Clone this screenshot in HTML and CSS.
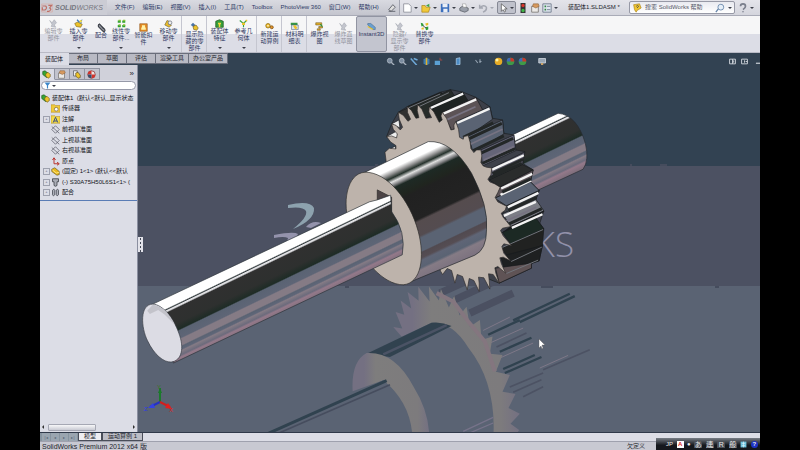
FILE: index.html
```
<!DOCTYPE html>
<html lang="zh-CN">
  <head>
    <meta charset="UTF-8" />
    <meta name="viewport" content="width=device-width, initial-scale=1.0" />
    <title>装配体1.SLDASM - SolidWorks</title>
    <link rel="stylesheet" href="styles.css" />
  </head>
  <body>
    <!-- Shared icons -->
    <svg class="defs" width="0" height="0">
      <symbol id="i-part" viewBox="0 0 12 12">
        <path d="M1 3l4-2 6 5v4l-3 1-7-5z" fill="#e9b91f" stroke="#5a4a12" stroke-width=".8" />
        <path d="M2 4l5 4 4-1" fill="none" stroke="#fff3a0" />
      </symbol>
      <symbol id="i-asm" viewBox="0 0 12 12">
        <path d="M1 2l3-1 5 4v4l-3 1-5-4z" fill="#35a535" stroke="#155015" stroke-width=".8" />
        <path d="M5 5l3-2 3 3v3L8 11 5 8z" fill="#edc32b" stroke="#6b5514" stroke-width=".8" />
      </symbol>
      <symbol id="i-insert" viewBox="0 0 12 12">
        <path d="M1 6l4-2 6 3-2 4-6-1z" fill="#ecc22b" stroke="#77601a" stroke-width=".8" />
        <path d="M4 1l3 3 3-2-1 4" fill="none" stroke="#3b76b8" stroke-width="1.5" />
        <circle cx="9" cy="3" r="1.6" fill="#f5dc4a" />
      </symbol>
      <symbol id="i-clip" viewBox="0 0 12 12">
        <path d="M3 1l7 7q2 4-2 3L2 5q-1-4 2-3l5 6" fill="#8d9099" stroke="#33373f" stroke-width="1.4" />
      </symbol>
      <symbol id="i-pattern" viewBox="0 0 12 12">
        <path d="M1 2h4v3H1zM7 2h4v3H7zM1 8h4v3H1zM7 8h4v3H7z" fill="#2e9f33" />
        <path d="M2 1h3v2H2zM8 1h3v2H8zM2 7h3v2H2zM8 7h3v2H8z" fill="#8bc43b" />
      </symbol>
      <symbol id="i-smart" viewBox="0 0 12 12">
        <path d="M1 1h10v10H1z" fill="#e78f25" stroke="#8d541b" stroke-width=".8" />
        <path d="M4 3h4v3h1v3H3V6h1z" fill="#fff2a8" />
      </symbol>
      <symbol id="i-move" viewBox="0 0 12 12">
        <path d="M1 8l3-6 3 1-1 4 4 1-3 3z" fill="#e9bc2a" stroke="#594e30" stroke-width=".7" />
        <circle cx="8" cy="5" r="2.5" fill="#eee" stroke="#6f7583" />
      </symbol>
      <symbol id="i-show" viewBox="0 0 12 12">
        <path d="M1 4l3-3 3 3-2 3z" fill="#4a74a6" />
        <path d="M4 6l4-2 3 4-2 3-4-1z" fill="#edc32b" stroke="#66531e" stroke-width=".8" />
      </symbol>
      <symbol id="i-feature" viewBox="0 0 12 12">
        <path d="M1 3l5-2 5 2v8H1z" fill="#359f3b" stroke="#275b20" />
        <path d="M4 5h4v2H7v4H5V7H4z" fill="#f2d43e" />
      </symbol>
      <symbol id="i-ref" viewBox="0 0 12 12">
        <path d="M1 2l5 4 4-4M6 6v5" fill="none" stroke="#38a13e" stroke-width="1.5" />
        <path d="M4 5h4v3H4zM9 1h2v2H9z" fill="#edc52a" />
      </symbol>
      <symbol id="i-motion" viewBox="0 0 12 12">
        <circle cx="4" cy="5" r="3" fill="#f0bb2b" stroke="#8b6b13" />
        <circle cx="9" cy="7" r="2" fill="#e5952a" stroke="#7a4e13" />
        <circle cx="4" cy="5" r="1" fill="#fff" />
      </symbol>
      <symbol id="i-bom" viewBox="0 0 12 12">
        <path d="M1 1h9v3H1z" fill="#349745" />
        <path d="M2 4h9v6H2z" fill="#dbe4ee" stroke="#4a5d7b" stroke-width=".7" />
        <path d="M4 5l3-1 3 4-3 2z" fill="#ecc32d" />
      </symbol>
      <symbol id="i-explode" viewBox="0 0 12 12">
        <path d="M1 1h8v3H1zM5 6h5v2H5zM3 9h4v2H3z" fill="#e6b32b" stroke="#654d1d" stroke-width=".7" />
        <path d="M7 3l3 3" stroke="#2f9538" stroke-width="1.5" />
      </symbol>
      <symbol id="i-gray" viewBox="0 0 12 12">
        <path d="M1 2l3 3 3-4 3 4-3 3 2 3-6-1 1-3z" fill="#c3c5cd" stroke="#a5a8b1" stroke-width=".8" />
      </symbol>
      <symbol id="i-instant" viewBox="0 0 12 12">
        <path d="M1 2h4l6 5v3H8L1 4z" fill="#6a9fcf" stroke="#3f658e" stroke-width=".7" />
        <path d="M1 6l7 4" stroke="#e9c32e" stroke-width="1.5" />
      </symbol>
      <symbol id="i-replace" viewBox="0 0 12 12">
        <path d="M1 1l3 1 1 3-3 1zM7 7l4-1v4l-3 1z" fill="#2e9b39" />
        <path d="M7 2l4-1v3L8 5zM2 8l3-1v3H2z" fill="#e8bf2b" />
        <path d="M4 5l4 3" stroke="#2d2d2d" />
      </symbol>
      <symbol id="i-plane" viewBox="0 0 12 12">
        <path d="M6 1l5 5-5 5-5-5zM1 2l10 9" fill="none" stroke="#4d515d" stroke-width=".9" />
      </symbol>
      <symbol id="i-lens" viewBox="0 0 12 12">
        <circle cx="5" cy="5" r="3.2" fill="#7d8da0" stroke="#b8c1cc" />
        <path d="M7 7l4 4" stroke="#a9b2be" stroke-width="1.6" />
      </symbol>
      <symbol id="i-ball" viewBox="0 0 12 12">
        <circle cx="6" cy="6" r="5" fill="#3f9a48" />
        <path d="M6 6L1 6a5 5 0 0 1 5-5z" fill="#4067b8" />
        <path d="M6 6V1a5 5 0 0 1 5 5z" fill="#c8352d" />
      </symbol>
      <symbol id="i-look" viewBox="0 0 12 12">
        <circle cx="6" cy="6" r="5" fill="#e8e4e4" stroke="#8a3030" />
        <path d="M6 6V1a5 5 0 0 0-5 5zM6 6h5a5 5 0 0 1-5 5z" fill="#d2332c" />
        <path d="M6 6H1a5 5 0 0 0 5 5z" fill="#38506f" />
      </symbol>
      <symbol id="i-hand" viewBox="0 0 12 12">
        <path d="M2 4h8v7H2z" fill="#eceae7" stroke="#7a7672" />
        <path d="M4 1h6l1 3-4 2-4-2z" fill="#d79a5f" stroke="#7d552e" stroke-width=".6" />
      </symbol>
      <symbol id="i-mate" viewBox="0 0 12 12">
        <path d="M2 3q2-3 3 0v6q-2 3-3 0zM7 3q2-3 3 0v6q-2 3-3 0z" fill="#aeb1ba" stroke="#3d414b" />
      </symbol>
      <symbol id="i-bolt" viewBox="0 0 12 12">
        <path d="M2 1h8v4H8v5l-2 1-2-1V5H2z" fill="#a9acb5" stroke="#33363e" />
      </symbol>
      <symbol id="i-tree" viewBox="0 0 12 12">
        <path d="M2 1h5v7H2z" fill="#eee" stroke="#5d5f68" />
        <path d="M5 4l3-1 3 4v3L8 11 5 8z" fill="#edc32b" stroke="#4f4320" stroke-width=".8" />
      </symbol>
    </svg>

    <div class="app">
      <header class="titlebar">
        <div class="brand">
          <svg viewBox="0 0 18 18" class="brand-mark">
            <path d="M1 3h16v12H1z" fill="none" stroke="#d9a9a4" />
            <path d="M2 6h5q3 3-1 6H2V8M11 5h5l-3 4q4 2-1 5H9" fill="none" stroke="#bf6f66" stroke-width="1.8" />
          </svg>
          <b>SOLID</b><span>WORKS</span>
        </div>
        <nav class="menu">
          <a href="#">文件(F)</a>
          <a href="#">编辑(E)</a>
          <a href="#">视图(V)</a>
          <a href="#">插入(I)</a>
          <a href="#">工具(T)</a>
          <a href="#">Toolbox</a>
          <a href="#">PhotoView 360</a>
          <a href="#">窗口(W)</a>
          <a href="#">帮助(H)</a>
          <button aria-label="固定"><svg viewBox="0 0 12 12"><path d="M2 8l5-6 3 3-5 5zM2 10h8" fill="#ddd" stroke="#555963" /></svg></button>
        </nav>
        <div class="quick">
          <button class="drop" aria-label="新建"><svg viewBox="0 0 12 12"><path d="M2 1h6l3 3v7H2z" fill="#fff" stroke="#8a8d98" /></svg></button>
          <button class="drop" aria-label="打开"><svg viewBox="0 0 12 12"><path d="M1 3h4l1 2h5l-2 6H1z" fill="#f1c93a" stroke="#a8811d" stroke-width=".8" /><path d="M6 3l4-2v4" fill="#3ca548" /></svg></button>
          <button class="drop" aria-label="保存"><svg viewBox="0 0 12 12"><path d="M1 1h10v10H1z" fill="#3c6fbd" /><path d="M3 1h6v4H3zM4 7h5v4H4z" fill="#e9eef6" /></svg></button>
          <button class="drop" aria-label="打印"><svg viewBox="0 0 12 12"><path d="M1 6l3-2 7 2v3l-4 2-6-2z" fill="#9ba0ab" stroke="#62666f" /><path d="M4 1h4l1 4H5z" fill="#fff" stroke="#888" stroke-width=".6" /></svg></button>
          <button class="drop dim" aria-label="撤消"><svg viewBox="0 0 12 12"><path d="M2 2v4h4M2 6q5-5 8-1 1 4-4 6" fill="none" stroke="#a4a7b1" stroke-width="1.8" /></svg></button>
          <button class="drop pressed" aria-label="选择"><svg viewBox="0 0 12 12"><path d="M4 1v9l2-2 2 3 1-1-1-3h3z" fill="#fff" stroke="#444" stroke-width=".8" /></svg></button>
          <button aria-label="重建模型"><svg viewBox="0 0 12 12"><path d="M3 0h6v12H3z" fill="#333" /><circle cx="6" cy="3" r="2" fill="#d8352b" /><circle cx="6" cy="9" r="2" fill="#40b548" /></svg></button>
          <button aria-label="文件属性"><svg><use href="#i-hand" /></svg></button>
          <button class="drop" aria-label="选项"><svg viewBox="0 0 12 12"><path d="M1 1h10v10H1z" fill="#dfe7f0" stroke="#6a7688" /><path d="M3 4h2M3 8h2" stroke="#348842" stroke-width="2" /><path d="M6 4h4M6 8h4" stroke="#6a7688" /></svg></button>
        </div>
        <div class="doc-name">装配体1.SLDASM *</div>
        <label class="search">
          <svg viewBox="0 0 12 12"><path d="M2 2l7-1 2 5-5 3-1 2-2-3z" fill="#efc530" stroke="#ad8520" stroke-width=".8" /><path d="M5 4q2-2 3 0l-2 2" fill="none" stroke="#4b4b4b" /></svg>
          <input type="search" placeholder="搜索 SolidWorks 帮助" aria-label="搜索 SolidWorks 帮助" />
          <svg viewBox="0 0 12 12"><circle cx="7" cy="5" r="3.5" fill="#e6eff8" stroke="#6483a8" /><path d="M4 7l-3 4" stroke="#6483a8" stroke-width="1.5" /></svg>
          <i class="caret"></i>
        </label>
        <button class="drop help" aria-label="帮助"><svg viewBox="0 0 12 12"><path d="M3 4q0-3 3-3t3 3q0 2-3 4M6 10v1" fill="none" stroke="#7a7f8c" stroke-width="2" /></svg></button>
      </header>

      <div class="ribbon">
        <button disabled><svg><use href="#i-gray" /></svg><span>编辑零部件</span></button>
        <button class="more"><svg><use href="#i-insert" /></svg><span>插入零部件</span></button>
        <button class="narrow mid"><svg><use href="#i-clip" /></svg><span>配合</span></button>
        <button class="narrow more"><svg><use href="#i-pattern" /></svg><span>线性零部件...</span></button>
        <button class="mid"><svg><use href="#i-smart" /></svg><span>智能扣件</span></button>
        <button class="more"><svg><use href="#i-move" /></svg><span>移动零部件</span></button>
        <button class="low line"><svg><use href="#i-show" /></svg><span>显示隐藏的零部件</span></button>
        <button class="more line"><svg><use href="#i-feature" /></svg><span>装配体特征</span></button>
        <button class="more"><svg><use href="#i-ref" /></svg><span>参考几何体</span></button>
        <button class="low line"><svg><use href="#i-motion" /></svg><span>新建运动算例</span></button>
        <button class="low line"><svg><use href="#i-bom" /></svg><span>材料明细表</span></button>
        <button class="low line"><svg><use href="#i-explode" /></svg><span>爆炸视图</span></button>
        <button class="low" disabled><svg><use href="#i-gray" /></svg><span>爆炸直线草图</span></button>
        <button class="low active"><svg><use href="#i-instant" /></svg><span>Instant3D</span></button>
        <button class="low" disabled><svg><use href="#i-gray" /></svg><span>隐藏/显示零部件</span></button>
        <button class="low"><svg><use href="#i-replace" /></svg><span>替换零部件</span></button>
      </div>

      <div class="workspace">
        <div class="tabs">
          <button class="selected">装配体</button>
          <button>布局</button>
          <button>草图</button>
          <button>评估</button>
          <button>渲染工具</button>
          <button>办公室产品</button>
        </div>

        <div class="view-tools">
          <svg><use href="#i-lens" /></svg>
          <svg><use href="#i-lens" /></svg>
          <svg viewBox="0 0 12 12"><path d="M1 2l8 9M5 2l5 2" stroke="#6fa9d8" stroke-width="2" /></svg>
          <svg viewBox="0 0 12 12"><path d="M2 3l4-2 4 2v6l-4 2-4-2z" fill="#3a79b0" /><path d="M6 1v10" stroke="#e0b12c" stroke-width="2" /></svg>
          <svg viewBox="0 0 12 12"><path d="M1 5h7v6H1z" fill="#5ba0d3" /><path d="M8 1v3h3" stroke="#bd4b42" fill="none" /></svg>
          <svg class="spaced" viewBox="0 0 12 12"><path d="M3 2l5-1v9l-5 1z" fill="#4d8dc6" stroke="#a9cae6" /></svg>
          <svg class="spaced" viewBox="0 0 12 12"><path d="M2 4l3 4M7 6h3M8 3v5" stroke="#93a1b0" stroke-width="1.5" /></svg>
          <svg class="spaced" viewBox="0 0 12 12"><circle cx="6" cy="6" r="5" fill="#e6ab25" /><circle cx="4" cy="4" r="2" fill="#fff1a0" /></svg>
          <svg><use href="#i-ball" /></svg>
          <svg><use href="#i-ball" /></svg>
          <svg class="spaced" viewBox="0 0 12 12"><path d="M1 2h9v6H1z" fill="#9aa7b5" stroke="#d8dee5" /><path d="M4 8h3v4H4z" fill="#c9a166" /></svg>
        </div>
        <div class="window-tools">
          <svg viewBox="0 0 12 12"><path d="M1 2h10v8H1zM6 2v8M8 4v4" fill="none" stroke="#cfd4da" stroke-width="1.6" /></svg>
          <svg viewBox="0 0 12 12"><path d="M1 2h10v8H1zM6 4v4M8 6h3" fill="none" stroke="#cfd4da" stroke-width="1.6" /></svg>
          <svg viewBox="0 0 12 12"><path d="M5 9h7" stroke="#cfd4da" stroke-width="2" /></svg>
        </div>

        <div class="content">
          <aside class="panel">
            <div class="panel-tabs">
              <button class="selected" aria-label="设计树"><svg><use href="#i-asm" /></svg></button>
              <button aria-label="属性"><svg><use href="#i-hand" /></svg></button>
              <button aria-label="配置"><svg><use href="#i-tree" /></svg></button>
              <button aria-label="外观"><svg><use href="#i-look" /></svg></button>
              <span>»</span>
            </div>
            <label class="filter">
              <svg viewBox="0 0 12 12"><path d="M1 1h10L7 6v5H5V6z" fill="#3c86c9" /></svg>
              <i class="caret"></i>
              <input type="text" aria-label="过滤器" />
            </label>
            <ul class="tree">
              <li class="root"><svg><use href="#i-asm" /></svg>装配体1&nbsp; (默认&lt;默认_显示状态</li>
              <li><svg viewBox="0 0 12 12"><path d="M0 1h5l1 1h6v9H0z" fill="#f0ca3b" stroke="#b38a1d" stroke-width=".7" /><circle cx="7" cy="7" r="2.5" fill="#fff" stroke="#7b6b4c" /></svg>传感器</li>
              <li class="expand"><svg viewBox="0 0 12 12"><path d="M0 1h5l1 1h6v9H0z" fill="#f3da4b" stroke="#b38a1d" stroke-width=".7" /><path d="M3 10l3-7 3 7M4 8h4" fill="none" stroke="#334c86" stroke-width="1.3" /></svg>注解</li>
              <li><svg><use href="#i-plane" /></svg>前视基准面</li>
              <li><svg><use href="#i-plane" /></svg>上视基准面</li>
              <li><svg><use href="#i-plane" /></svg>右视基准面</li>
              <li><svg viewBox="0 0 12 12"><path d="M4 2v7h6M2 4l2-3 2 3M8 7l3 2-3 2" fill="none" stroke="#b8312b" stroke-width="1.3" /></svg>原点</li>
              <li class="expand"><svg><use href="#i-part" /></svg>(固定) 1&lt;1&gt; (默认&lt;&lt;默认</li>
              <li class="expand"><svg><use href="#i-bolt" /></svg>(-) S30A75H50L6S1&lt;1&gt; (</li>
              <li class="expand"><svg><use href="#i-mate" /></svg>配合</li>
            </ul>
            <div class="scroll"><i class="left"></i><span></span><i class="right"></i></div>
          </aside>

          <main class="viewport">
            <svg class="scene" viewBox="138 65 622 367" preserveAspectRatio="xMidYMid slice">
              <defs>
                <linearGradient id="shaft" gradientUnits="userSpaceOnUse" x1="157" y1="331" x2="239" y2="501">
                  <stop offset="0" stop-color="#fff" />
                  <stop offset=".13" stop-color="#fff" />
                  <stop offset=".15" stop-color="#30383b" />
                  <stop offset=".165" stop-color="#e7e7e9" />
                  <stop offset=".18" stop-color="#d8d8dc" />
                  <stop offset=".2" stop-color="#303030" />
                  <stop offset=".42" stop-color="#2e302f" />
                  <stop offset=".52" stop-color="#1e2c26" />
                  <stop offset=".54" stop-color="#5a6373" />
                  <stop offset=".65" stop-color="#5e6576" />
                  <stop offset=".67" stop-color="#857b85" />
                  <stop offset=".76" stop-color="#857b85" />
                  <stop offset=".78" stop-color="#5a6373" />
                  <stop offset=".82" stop-color="#5f6678" />
                  <stop offset=".84" stop-color="#857b85" />
                  <stop offset=".9" stop-color="#6c6b7c" />
                  <stop offset=".93" stop-color="#94798a" />
                  <stop offset="1" stop-color="#806f7d" />
                </linearGradient>
                <linearGradient id="hub" gradientUnits="userSpaceOnUse" x1="121" y1="255" x2="277" y2="583">
                  <stop offset="0" stop-color="#fff" />
                  <stop offset=".07" stop-color="#fff" />
                  <stop offset=".11" stop-color="#8b8b8b" />
                  <stop offset=".14" stop-color="#26322c" />
                  <stop offset=".17" stop-color="#e0e0e0" />
                  <stop offset=".2" stop-color="#77787a" />
                  <stop offset=".22" stop-color="#1e2a25" />
                  <stop offset=".3" stop-color="#20251f" />
                  <stop offset=".33" stop-color="#212121" />
                  <stop offset=".54" stop-color="#232323" />
                  <stop offset=".56" stop-color="#554c4e" />
                  <stop offset=".67" stop-color="#544c50" />
                  <stop offset=".69" stop-color="#5a6373" />
                  <stop offset=".79" stop-color="#5a6373" />
                  <stop offset=".8" stop-color="#514a50" />
                  <stop offset=".84" stop-color="#554d53" />
                  <stop offset=".86" stop-color="#5f6576" />
                  <stop offset=".91" stop-color="#5a6373" />
                  <stop offset=".93" stop-color="#857b85" />
                  <stop offset="1" stop-color="#7d7380" />
                </linearGradient>
                <linearGradient id="mirror" x1="0" y1="0" x2="1" y2="0">
                  <stop offset=".15" stop-color="#747082" />
                  <stop offset=".3" stop-color="#7e7d7d" />
                  <stop offset=".85" stop-color="#7d7b7d" />
                  <stop offset="1" stop-color="#747082" />
                </linearGradient>
              </defs>

              <!-- Backdrop -->
              <path d="M0 0h900v166H0z" fill="#324252" />
              <path d="M0 166h900v120H0z" fill="#4c5162" />
              <path d="M0 286h900v250H0z" fill="#5a6373" />
              <path d="M230 286h3v2h-3zM345 286h4v2h-4zM375 164h3v2h-3zM541 286h12v2h-12zM630 164h2v2h-2zM660 164h7v2h-7zM715 286h4v2h-4z" fill="#454c5d" />

              <!-- Watermark -->
              <path d="M288 205q22-5 26 3 1 12-21 21 15-12 13-18-3-5-18-3z" fill="#8da2ae" />
              <path d="M274 235q20-4 24-1-2 7-18 16 8-9 8-12-4-2-14 0zM306 227q6-7 15-4l-10 5z" fill="#9493ac" />
              <text x="574" y="257" text-anchor="end" class="watermark">KS</text>

              <!-- Model, drawn at three times its screen size -->
              <g transform="translate(340 80) scale(.333)" stroke-linejoin="round">
                <!-- Reflection -->
                <path d="M345 660l140-65M390 700l130-60M300 640l120-54" stroke="#4b5061" stroke-width="22" />
                <path d="M520 722l170-80M540 727l165-78M480 816l95-42M490 868l95-42M495 880l110-48M445 765l95-44" stroke="#30424f" stroke-width="7" />
                <path d="M470 802l90-42M510 922l100-42M520 938l85-38M610 870l140-60M550 951l60-30" stroke="#4c5263" stroke-width="5" />
                <path d="M430 752l80-40M450 790l100-45M480 835l100-45M600 865l85-38" stroke="#7d7788" stroke-width="3" />
                <path d="M185 770L160 742l27 4L167 697l26 8L182 662l32 24L203 637l33 26L235 621l34 44L267 620l30 42L303 628l24 55L343 648l16 59L380 681l10 60L420 721l5 60L458 770l-8 52L488 826l-20 50L510 886l-22 50L527 943l-21 42L540 1002l-28 30L538 1051l-20 30H400L200 790z" fill="url(#mirror)" />
                <path d="M290 640l50 25 45 60 50 60 30 90" fill="none" stroke="#84767f" stroke-width="12" />
                <path d="M75 822l200-93q62-4 110 74 87 110 75 277H250z" fill="#5a6373" />
                <path d="M80 822l195-93q30-4 60 10L150 832z" fill="#31424f" />
                <path d="M130 824l190-88" stroke="#4b5365" stroke-width="8" />
                <path d="M38 935q-5-90 42-115 85-5 140 100 50 80 48 160H215q0-100-85-178z" fill="url(#mirror)" />
                <path d="M-260 1080L130 902q86 70 88 180z" fill="#5a6373" />
                <path d="M-280 1090L140 903" stroke="#30424f" stroke-width="9" />
                <path d="M-270 1098L150 915" stroke="#464d5e" stroke-width="5" />
                <path d="M370 1055l90-42M385 1062l75-32" stroke="#77738a" stroke-width="4" />

                <!-- Far end of the shaft -->
                <path d="M500 173l155-73q57 5 82 91 12 50-7 77l-190 88z" fill="url(#shaft)" stroke="#252b30" stroke-width="2" />

                <!-- Gear teeth -->
                <path d="M140 170L155 132 175 97 202 80 300 37 332 29 368 36 408 52 450 80 458 115 488 120 492 160 522 165 528 210 555 215 548 250 580 270 572 306 598 332 588 360 612 394 600 430 612 447 600 470 608 497 598 543 575 550 575 565 478 610 350 560 300 150z" fill="#3d4049" stroke="#1b1e20" stroke-width="2" />
                <g stroke="#171a1c" stroke-width="2">
                  <path d="M135 217l30-18 5 14zM140 170l36-20-6 30zM155 132l22-12 3 24z" fill="#eee" />
                  <path d="M175 97l125-58 3 35-100 50z" fill="#303030" />
                  <path d="M202 80l102-43 24 35-100 43z" fill="#242826" />
                  <path d="M233 74l99-45 26 41-100 45z" fill="#262b29" />
                  <path d="M268 80l100-44 30 47-100 44z" fill="#1e2322" />
                  <path d="M307 97l101-45 28 52-101 46z" fill="#5c5356" />
                  <path d="M348 125l102-45 8 38-90 62-13-8z" fill="#5a6373" />
                  <path d="M385 167l103-47 4 42-92 56z" fill="#5a6373" />
                  <path d="M423 210l99-45 6 47-100 46z" fill="#656578" />
                  <path d="M455 265l100-49-7 38-100 46z" fill="#5b5a69" />
                  <path d="M448 300l100-46 32 16-100 52z" fill="#2a2c2c" />
                  <path d="M480 322l100-52-8 36-107 49z" fill="#5b5257" />
                  <path d="M465 355l107-49 26 26-98 46z" fill="#5a6373" />
                  <path d="M500 378l98-46-10 26-100 44z" fill="#3d4147" />
                  <path d="M488 402l100-44 24 35-99 47z" fill="#7b7d85" />
                  <path d="M513 440l99-46-24 20-100 44z" fill="#191d1c" />
                  <path d="M488 458l100-44 24 33-97 50z" fill="#1c2924" />
                  <path d="M485 505l127-58-4 50-96 46z" fill="#212221" />
                  <path d="M482 530l126-33-10 46-101 37z" fill="#1e2021" />
                  <path d="M467 565l108-15v15l-97 45z" fill="#5f5355" />
                </g>
                <path d="M272 84l98-43M311 101l98-43M352 129l97-43M457 269l95-43M484 326l93-44M504 382l92-43M516 444l92-41M482 345l92-43M492 408l96-42" fill="none" stroke="#f3f3f3" stroke-width="7" />
                <path d="M205 84l96-42M237 80l90-42M487 503l123-54M514 545l92-43M500 581l95-40" fill="none" stroke="#70737a" stroke-width="3" />
                <path d="M370 172l90-43M388 176l98-46M425 219l95-44M400 212l92-44M428 250l98-44M458 281l92-43M450 294l96-44M487 337l86-40M506 392l84-39M508 432l98-46" fill="none" stroke="#232727" stroke-width="9" />
                <path d="M315 122l92-42M393 192l95-44M432 240l90-40M497 424l92-42" fill="none" stroke="#777382" stroke-width="5" />

                <!-- Gear face -->
                <path d="M135 217L148 205 168 207 168 197 152 186 140 170 155 168 170 174 172 162 160 148 155 132 168 136 181 150 188 142 178 118 175 97 190 106 204 124 212 118 203 98 202 80 215 92 228 115 237 113 232 92 233 74 246 88 258 115 275 113 267 96 268 80 282 96 298 127 307 120 303 108 307 97 320 115 333 150 343 148 342 135 348 125 356 148 359 172 370 178 372 170 385 167 391 188 393 206 402 218 410 210 423 210 426 228 423 248 430 258 440 262 456 264 453 285 444 298 450 306 465 312 481 322 474 338 466 353 474 366 500 379 496 391 484 400 490 412 513 440 488 445 482 452 490 468 515 497 492 492 486 500 492 520 512 543 490 532 480 534 484 550 497 580 474 560 465 564 468 580 478 610 460 584 446 582 448 600 450 628 432 594 416 592 418 610 418 635 402 602 388 596 382 630 368 590 352 584 345 610 335 572 322 566 308 584 302 574 250 400 150 330z" fill="#bdb3ab" stroke="#2d2b2a" stroke-width="2" />

                <!-- Hub -->
                <path d="M75 277l190-92q70-5 130 95 52 100 45 170 0 60-35 76l-215 89z" fill="url(#hub)" stroke="#202427" stroke-width="2" />
                <path d="M75 277C20 280 5 370 30 440 60 540 130 615 190 615c55-5 65-85 45-160-25-95-95-180-160-178z" fill="#bdb3ab" stroke="#2b2a29" stroke-width="2" />
                <path d="M112 330l43 22v45l-43-33z" fill="#4c4446" stroke="#262424" stroke-width="2" />

                <!-- Near end of the shaft -->
                <path d="M-562 673L88 366l24-6 40-14 3 49q45 62 32 130L-500 850z" fill="url(#shaft)" stroke="#2b3238" stroke-width="2" />
                <path d="M-562 673c-40 0-36 70-16 110 20 42 48 65 71 64 32-4 40-42 23-87-17-48-50-86-78-87z" fill="#dcdce4" stroke="#343840" stroke-width="2" />
                <path d="M-562 675c30 4 50 28 66 60l-30-30-20-14-25 12-8-10z" fill="#c3c3ca" />
              </g>

              <!-- Axis triad -->
              <g fill="none" stroke-width="2">
                <path d="M160 402v-14" stroke="#1c7a2b" />
                <path d="M160 402l-10 5" stroke="#2431c6" />
                <path d="M160 402l10 5" stroke="#d01f1f" />
                <path d="M158 393l2-5 2 5z" fill="#1c7a2b" stroke="none" />
                <path d="M153 403l-5 5 7 0z" fill="#3543e0" stroke="none" />
                <path d="M168 403l4 6-7-1z" fill="#e02020" stroke="none" />
              </g>
              <g class="axis">
                <text x="157" y="389" fill="#3e7320">Y</text>
                <text x="144" y="411" fill="#2f3de0">Z</text>
                <text x="169" y="412" fill="#e02020">X</text>
              </g>

              <path d="M539 339v9l2-2 1 3 1-1-1-3h3z" fill="#fff" stroke="#555" stroke-width=".4" />
            </svg>
            <div class="grip"></div>
          </main>
        </div>
      </div>

      <div class="sheets">
        <div class="nav-buttons">
          <button aria-label="第一页">|◂</button>
          <button aria-label="上一页">◂</button>
          <button aria-label="下一页">▸</button>
          <button aria-label="最后一页">▸|</button>
        </div>
        <button class="sheet selected">模型</button>
        <button class="sheet">运动算例 1</button>
      </div>

      <footer class="status">
        <span>SolidWorks Premium 2012 x64 版</span>
        <span class="state">欠定义</span>
        <div class="ime">
          <span class="jp">JP</span>
          <b>A</b>
          <span>●</span>
          <i>あ</i>
          <i>連</i>
          <i>R</i>
          <i>般</i>
          <svg viewBox="0 0 12 12"><path d="M1 1h10v10H1z" fill="#6fc3de" /><path d="M3 4h6M3 8h6M6 1v10" stroke="#eafaff" /></svg>
          <em>?</em>
        </div>
      </footer>
    </div>
  </body>
</html>
```
FILE: styles.css
```
/* General Reset */
* {
  margin: 0;
  padding: 0;
  box-sizing: border-box;
}

body {
  background-color: #000;
  color: #23252d;
  font-family: "Liberation Sans", "Noto Sans CJK SC", sans-serif;
  font-size: 6px;
  line-height: 7px;
}

button,
input {
  font: inherit;
  color: inherit;
  background: none;
  border: none;
}

a {
  color: inherit;
  text-decoration: none;
}

svg {
  display: block;
  flex: none;
}

.defs {
  position: absolute;
}

.app {
  width: 90%;
  height: 100vh;
  margin: 0 auto;
  display: flex;
  flex-direction: column;
  background-color: #dcdde6;
  overflow: hidden;
}

.caret {
  flex: none;
  border: 2px solid transparent;
  border-top-color: #3c3f49;
  border-bottom: none;
}

/* Title bar */
.titlebar {
  height: 16px;
  flex: none;
  display: flex;
  align-items: center;
  background: linear-gradient(#e4e4ea, #d4d5dd);
  border-bottom: 1px solid #a9abb7;
}

.brand {
  align-self: stretch;
  display: flex;
  align-items: center;
  padding: 0 4px 0 1px;
  font-size: 7px;
  font-style: italic;
  color: #75767f;
  background-color: #cbccd4;
}

.brand-mark {
  width: 12px;
  height: 12px;
  margin-right: 2px;
}

.menu {
  align-self: stretch;
  flex: none;
  display: flex;
  align-items: center;
  gap: 8px;
  padding: 0 2px 0 8px;
  color: #2c3a66;
  background: linear-gradient(#d9dae1, #c4c5ce);
  border-right: 1px solid #a3a5b1;
  white-space: nowrap;
}

.quick {
  display: flex;
  align-items: center;
  gap: 2px;
  padding-left: 2px;
}

.quick button,
.help {
  flex: none;
  display: flex;
  align-items: center;
  gap: 1px;
}

.menu svg,
.quick svg,
.help svg,
.search svg {
  width: 10px;
  height: 10px;
}

.drop::after {
  content: "";
  border: 2px solid transparent;
  border-top-color: #3c3f49;
  border-bottom: none;
  margin: 0 1px;
}

.dim::after {
  border-top-color: #a4a7b1;
}

.quick .pressed {
  height: 13px;
  background-color: #bfc1cb;
  border: 1px solid #868995;
  border-radius: 2px;
}

.doc-name {
  flex: 1;
  text-align: center;
  white-space: nowrap;
}

.search {
  width: 106px;
  height: 13px;
  display: flex;
  align-items: center;
  gap: 3px;
  padding: 0 2px;
  background: linear-gradient(#e9eaf0, #fff);
  border: 1px solid #9799a6;
  border-radius: 2px;
}

.search input {
  flex: 1;
  min-width: 0;
}

.search input::placeholder {
  color: #555866;
}

.help {
  margin: 0 5px 0 3px;
}

/* Ribbon */
.ribbon {
  height: 37px;
  flex: none;
  display: flex;
  padding-left: 1px;
  background: linear-gradient(#f6f6f7 50%, #dcdde6 50%);
  border-bottom: 1px solid #b9bac5;
}

.ribbon button {
  position: relative;
  flex: none;
  width: 25px;
  height: 36px;
  padding: 3px;
  display: flex;
  flex-direction: column;
  align-items: center;
  justify-content: flex-start;
  color: #30395f;
}

.ribbon svg {
  width: 9px;
  height: 9px;
}

.ribbon .narrow {
  width: 20px;
  padding: 3px 1px;
}

.ribbon .mid {
  padding-top: 7px;
}

.ribbon .low {
  padding-top: 6px;
}

.ribbon .line {
  border-left: 1px solid #c5c6d0;
  padding-right: 2px;
}

.ribbon button:disabled {
  color: #92949e;
}

.ribbon .active {
  width: 31px;
  padding: 5px 1px;
  background-color: #c3c5cf;
  border: 1px solid #9194a2;
  border-radius: 2px;
}

.ribbon .more::after {
  content: "";
  position: absolute;
  bottom: 3px;
  border: 2px solid transparent;
  border-top-color: #3c3f49;
  border-bottom: none;
}

/* Workspace */
.workspace {
  position: relative;
  flex: 1;
  min-height: 0;
  display: flex;
  flex-direction: column;
  background-color: #324252;
}

.tabs {
  height: 12px;
  flex: none;
  display: flex;
}

.tabs button {
  height: 11px;
  min-width: 29px;
  padding: 0 4px;
  background-color: #b9bac4;
  border: 1px solid #6a6e7b;
  border-left: none;
  white-space: nowrap;
}

.tabs .selected {
  height: 12px;
  background-color: #dcdde6;
  border-color: #dcdde6;
}

.view-tools,
.window-tools {
  position: absolute;
  top: 4px;
  display: flex;
  gap: 3px;
}

.view-tools {
  left: 48%;
}

.window-tools {
  right: 0;
  gap: 5px;
}

.view-tools svg,
.window-tools svg {
  width: 9px;
  height: 9px;
}

.window-tools svg {
  width: 7px;
}

.view-tools .spaced {
  margin-left: 8px;
}

.content {
  flex: 1;
  min-height: 0;
  display: flex;
}

/* Feature tree panel */
.panel {
  width: 98px;
  flex: none;
  display: flex;
  flex-direction: column;
  background-color: #dcdde6;
  border-right: 1px solid #8b8fa0;
  overflow: hidden;
}

.panel-tabs {
  height: 15px;
  flex: none;
  display: flex;
  align-items: flex-end;
  background-color: #d0d1da;
}

.panel-tabs button {
  width: 15px;
  height: 12px;
  padding: 1px 2px;
  background-color: #c2c3cd;
  border: 1px solid #9194a1;
  border-left: none;
}

.panel-tabs .selected {
  background-color: #dcdde6;
  border-bottom-color: #dcdde6;
}

.panel-tabs svg {
  width: 9px;
  height: 9px;
}

.panel-tabs span {
  margin: 0 3px 3px auto;
  font-size: 8px;
}

.filter {
  height: 9px;
  flex: none;
  display: flex;
  align-items: center;
  gap: 1px;
  margin: 1px 1px 3px;
  padding: 0 2px;
  background-color: #fff;
  border: 1px solid #9699a8;
  border-radius: 5px;
}

.filter svg {
  width: 7px;
  height: 7px;
}

.filter input {
  width: 60px;
  height: 6px;
}

.tree {
  list-style: none;
  color: #101218;
  border-bottom: 1px solid #5a7cb5;
  padding-bottom: 2px;
}

.tree li {
  position: relative;
  height: 10px;
  display: flex;
  align-items: center;
  gap: 2px;
  padding-left: 11px;
  margin-bottom: 1px;
  white-space: nowrap;
}

.tree li:nth-child(odd) {
  margin-bottom: 0;
}

.tree .root {
  padding-left: 1px;
}

.tree svg {
  width: 9px;
  height: 9px;
}

.tree .expand::before {
  content: "+";
  position: absolute;
  left: 3px;
  width: 5px;
  height: 5px;
  border: 1px solid #9ea1ae;
  line-height: 3px;
  font-size: 4px;
  color: #5d606b;
  text-align: center;
}

.scroll {
  height: 10px;
  margin-top: auto;
  display: flex;
  align-items: center;
  padding: 0 2px;
}

.scroll span {
  width: 48px;
  height: 7px;
  margin: 0 auto 0 4px;
  background: linear-gradient(#f7f7f9, #c9cad3);
  border: 1px solid #a6a8b4;
  border-radius: 1px;
}

.scroll i {
  border: 2px solid transparent;
}

.scroll .left {
  border-right-color: #333;
  border-left: none;
}

.scroll .right {
  border-left-color: #333;
  border-right: none;
}

/* 3D view */
.viewport {
  position: relative;
  flex: 1;
  min-width: 0;
  overflow: hidden;
}

.scene {
  width: 100%;
  height: 100%;
}

.grip {
  position: absolute;
  left: 0;
  top: 47%;
  width: 5px;
  height: 15px;
  background: radial-gradient(circle, #444957 1px, transparent 1px) 0 0 / 5px 4px #e3e3ea;
}

.watermark {
  font-family: "Open Sans", sans-serif;
  font-size: 35px;
  font-weight: 300;
  fill: #9291aa;
}

.axis {
  font-size: 6px;
}

/* Sheet tabs */
.sheets {
  height: 9px;
  flex: none;
  display: flex;
  border-top: 1px solid #30394a;
}

.nav-buttons {
  display: flex;
  padding-left: 2px;
  background-color: #8794a0;
}

.nav-buttons button {
  width: 8px;
  margin-right: 1px;
  font-size: 4px;
  color: #566474;
  background-color: #9aa5b0;
}

.sheet {
  padding: 0 5px;
  background-color: #bcbdc6;
  border: 1px solid #4a4e5a;
  border-top: none;
  white-space: nowrap;
}

.sheet.selected {
  background-color: #eeeef2;
}

/* Status bar */
.status {
  height: 9px;
  flex: none;
  display: flex;
  align-items: center;
  padding-left: 2px;
  font-size: 7px;
  background-color: #c8c9d2;
  border-top: 1px solid #9fa1ae;
}

.state {
  margin-left: auto;
  margin-right: 11px;
  font-size: 6px;
}

.ime {
  height: 12px;
  width: 104px;
  margin-top: -4px;
  display: flex;
  align-items: center;
  justify-content: space-between;
  padding: 0 2px 0 10px;
  font-size: 6px;
  font-family: "Liberation Sans", "Noto Sans CJK JP", sans-serif;
  color: #e8e8ea;
  background: linear-gradient(#777d86, #15181d 60%);
}

.ime b {
  width: 7px;
  color: #d8271f;
  background-color: #fff;
  text-align: center;
}

.ime i {
  width: 8px;
  font-style: normal;
  font-size: 7px;
  text-align: center;
  background-color: #4b4f56;
}

.ime svg {
  width: 7px;
  height: 7px;
}

.ime em {
  width: 7px;
  font-style: normal;
  font-weight: bold;
  text-align: center;
  border-radius: 50%;
  background-color: #1d32c4;
}
```
